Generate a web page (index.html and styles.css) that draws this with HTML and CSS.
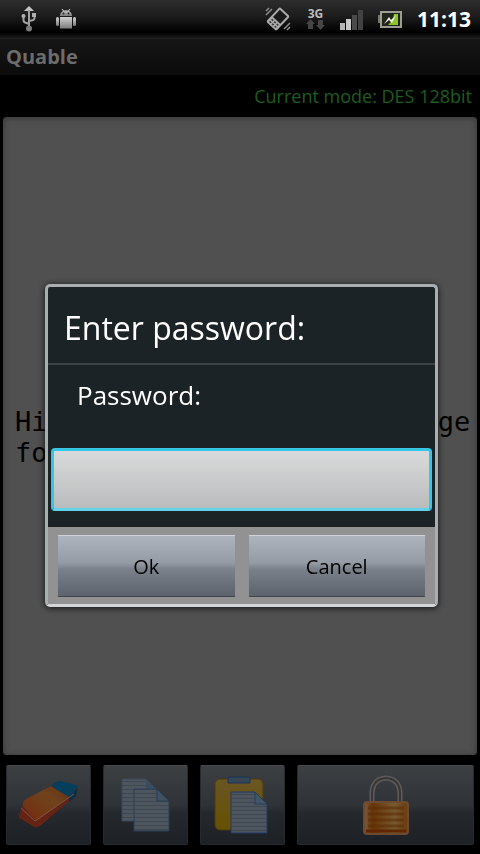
FILE: index.html
```html
<!DOCTYPE html>
<html lang="en">
<head>
<meta charset="UTF-8">
<meta name="viewport" content="width=device-width, initial-scale=1">
<title>Quable</title>
<link rel="stylesheet" href="styles.css">
</head>
<body>
  <header class="status-bar">
    <div class="status-left">
      <!-- usb -->
      <svg width="16" height="26" viewBox="0 0 16 26">
        <defs>
          <linearGradient id="silver" x1="0" y1="0" x2="0" y2="1">
            <stop offset="0" stop-color="#d2d2d2"/>
            <stop offset="1" stop-color="#7c7c7c"/>
          </linearGradient>
        </defs>
        <path d="M8 0l5 5H3z" fill="#c4c4c4"/>
        <path d="M8 4v18M2.500 10v4q0 2.500 3 3l2.500 1M13.500 9v3q0 2-3 2.500L8 15" fill="none" stroke="#a2a2a2" stroke-width="2"/>
        <rect x="11" y="7" width="4" height="4" fill="#b0b0b0"/>
        <circle cx="2.500" cy="10" r="2" fill="#b0b0b0"/>
        <circle cx="8" cy="22.500" r="3" fill="#7c7c7c"/>
      </svg>
      <!-- android robot -->
      <svg width="20" height="20" viewBox="0 0 20 20" fill="url(#silver)">
        <path d="M4 7Q4 3.500 7 2L5.500 0h1L8 1.500q2-.6 4 0L13.500 0h1L13 2q3 1.500 3 5z"/>
        <path d="M4 8h12v11.500H4z"/>
        <rect x="0" y="8" width="3" height="9" rx="1.500"/>
        <rect x="17" y="8" width="3" height="9" rx="1.500"/>
        <circle cx="7.500" cy="4.500" r="1" fill="#222"/>
        <circle cx="12.500" cy="4.500" r="1" fill="#222"/>
      </svg>
    </div>
    <div class="status-right">
      <!-- vibrate -->
      <svg width="26" height="24" viewBox="0 0 26 24">
        <g transform="rotate(43 13 12)">
          <rect x="6" y="2" width="14" height="20" rx="2" fill="#aaa"/>
          <rect x="8" y="4" width="10" height="10" fill="#1a1a1a"/>
          <path d="M8.500 16.500h2M12 16.500h2M15.500 16.500h2M8.500 19.500h2M12 19.500h2M15.500 19.500h2" stroke="#333" stroke-width="1.500"/>
        </g>
        <path d="M1 8l6-6M1 4l3-3M19 22l6-6M22 23l3-3" fill="none" stroke="#8d8d8d" stroke-width="1.500"/>
      </svg>
      <div class="network">
        <span>3G</span>
        <svg width="19" height="11" viewBox="0 0 19 11" fill="#454545">
          <path d="M4.500 0L9 5H7v5H2V5H0z"/>
          <path d="M14.500 11L10 6h2V1h5v5h2z"/>
        </svg>
      </div>
      <!-- signal -->
      <svg width="23" height="22" viewBox="0 0 23 22">
        <rect x="0" y="15" width="5" height="7" fill="#b5b5b5"/>
        <rect x="6" y="11" width="5" height="11" fill="#c8c8c8"/>
        <rect x="12" y="7" width="5" height="15" fill="#4a4a4a"/>
        <rect x="18" y="2" width="5" height="20" fill="#424242"/>
      </svg>
      <!-- battery -->
      <svg width="24" height="17" viewBox="0 0 24 17">
        <rect x="0" y="4" width="3" height="8" fill="#777970"/>
        <rect x="3" y="1" width="20" height="15" fill="#20241a" stroke="#9c9d94" stroke-width="2"/>
        <path d="M10 14L20 3v11z" fill="#85b927"/>
        <path d="M16 3h4v11h-6z" fill="#8cc528"/>
        <path d="M6 13l5-7 2 3 5-5-4 8-3-3z" fill="#f0f4df"/>
      </svg>
      <time>11:13</time>
    </div>
  </header>

  <main class="app">
    <h1 class="title-bar">Quable</h1>
    <p class="mode">Current mode: DES 128bit</p>
    <div class="message-panel">
      <textarea class="message" rows="2" aria-label="Message">Hi! This is a secret message
for you</textarea>
    </div>
    <nav class="toolbar">
      <button class="tool" aria-label="Clear">
        <svg width="64" height="52" viewBox="0 0 64 52">
          <defs>
            <linearGradient id="rubber" x1="0" y1="1" x2="1" y2="0">
              <stop offset="0" stop-color="#74290f"/>
              <stop offset=".6" stop-color="#70431c"/>
              <stop offset="1" stop-color="#643019"/>
            </linearGradient>
          </defs>
          <path d="M7 24L38 4Q40 2 43 3l17 4q2 1 1 3l-3 7-35 30q-3 2-6 1L4 40q-3-1-2-4z" fill="#642313"/>
          <path d="M9 20L34 7l18 11-31 23q-2 1-4-1L6 27q-1-4 3-7z" fill="url(#rubber)"/>
          <path d="M34 7l5-4q2-1 5-1l15 4q3 1 1 3l-8 9z" fill="#053f5b"/>
          <path d="M52 18l9-9-2 8-7 6z" fill="#093047"/>
          <path d="M4 29l14 13L57 15" fill="none" stroke="#7c5547" stroke-width="1"/>
        </svg>
      </button>
      <button class="tool" aria-label="Copy">
        <svg width="50" height="54" viewBox="0 0 50 54">
          <defs>
            <pattern id="lines" width="4" height="4" patternUnits="userSpaceOnUse">
              <rect width="4" height="4" fill="#4d555e"/>
              <rect y="3" width="4" height="1" fill="#3f4751"/>
            </pattern>
          </defs>
          <path d="M1 1h24l10 10v32H1z" fill="url(#lines)" stroke="#39485a"/>
          <path d="M25 1v10h10z" fill="#3a4c60"/>
          <path d="M13 11h23l12 12v30H13z" fill="url(#lines)" stroke="#2b3e56"/>
          <path d="M36 11v12h12z" fill="#3f5163" stroke="#2b3c50"/>
        </svg>
      </button>
      <button class="tool" aria-label="Paste">
        <svg width="58" height="60" viewBox="0 0 58 60">
          <defs>
            <linearGradient id="board" x1="0" y1="0" x2="0" y2="1">
              <stop offset="0" stop-color="#695624"/>
              <stop offset="1" stop-color="#665000"/>
            </linearGradient>
          </defs>
          <rect x="1" y="4" width="48" height="51" rx="5" fill="url(#board)" stroke="#4b3a10"/>
          <path d="M14 8V3q0-1 1-1h20q1 0 1 1v5z" fill="#374654" stroke="#1a3056"/>
          <path d="M17 17h24l12 12v29H17z" fill="url(#lines)" stroke="#22386a"/>
          <path d="M41 17v12h12z" fill="#40556a" stroke="#2b3c50"/>
        </svg>
      </button>
      <button class="tool" aria-label="Encrypt">
        <svg width="46" height="60" viewBox="0 0 46 60">
          <defs>
            <linearGradient id="brass" x1="0" y1="0" x2="1" y2="0">
              <stop offset="0" stop-color="#7d5a3a"/>
              <stop offset=".2" stop-color="#673708"/>
              <stop offset=".7" stop-color="#7b6034"/>
              <stop offset="1" stop-color="#68380e"/>
            </linearGradient>
            <linearGradient id="ribs" x1="0" y1="0" x2="0" y2="6" gradientUnits="userSpaceOnUse" spreadMethod="repeat">
              <stop offset="0" stop-color="#5a2804" stop-opacity="0"/>
              <stop offset=".5" stop-color="#5a2804" stop-opacity=".7"/>
              <stop offset="1" stop-color="#5a2804" stop-opacity="0"/>
            </linearGradient>
          </defs>
          <path d="M9 26V17Q10 4 23 3q13 1 14 14v9" fill="none" stroke="#5d5a5b" stroke-width="5"/>
          <path d="M9 26V17Q10 4 23 3q13 1 14 14v9" fill="none" stroke="#393636" stroke-width="2"/>
          <rect x="1" y="27" width="44" height="32" rx="3" fill="url(#brass)" stroke="#6b4a30" stroke-width="2"/>
          <path d="M5 29h36v27H5z" fill="url(#ribs)"/>
          <path d="M3 56h40" stroke="#5e2605" stroke-width="3"/>
        </svg>
      </button>
    </nav>
  </main>

  <div class="overlay">
    <form class="dialog" role="dialog" aria-labelledby="dialog-title">
      <h2 class="dialog-title" id="dialog-title">Enter password:</h2>
      <div class="dialog-body">
        <label for="password">Password:</label>
        <input type="password" id="password">
      </div>
      <div class="dialog-buttons">
        <button type="button">Ok</button>
        <button type="button">Cancel</button>
      </div>
    </form>
  </div>
</body>
</html>
```
FILE: styles.css
```css
* {
  box-sizing: border-box;
}

body {
  margin: 0;
  height: 100vh;
  display: flex;
  flex-direction: column;
  background: #000;
  color: #fff;
  font-family: "Open Sans", "Noto Sans", sans-serif;
  overflow: hidden;
}

svg {
  display: block;
}

/* status bar */
.status-bar {
  height: 38px;
  flex: none;
  display: flex;
  justify-content: space-between;
  align-items: center;
  padding: 0 9px 0 21px;
  background: linear-gradient(#2d2d2d, #1b1b1b 45%, #000 85%, #1a1a1a);
}

.status-left,
.status-right {
  display: flex;
  align-items: center;
}

.status-left {
  gap: 19px;
}

.status-right {
  gap: 15px;
}

.network {
  display: flex;
  flex-direction: column;
  align-items: center;
  font-size: 12px;
  line-height: 11px;
  font-weight: bold;
  color: #bbb;
}

.status-bar time {
  font-size: 21px;
  font-weight: bold;
}

/* app */
.app {
  flex: 1;
  display: flex;
  flex-direction: column;
}

.title-bar {
  margin: 0;
  padding: 0 6px 1px;
  border-top: 1px solid #202020;
  background: linear-gradient(#161616, #0b0b0b);
  color: #6c6c6c;
  font-size: 20px;
  line-height: 35px;
  font-weight: bold;
}

.mode {
  margin: 0;
  padding: 0 8px;
  color: #1f5c1f;
  font-size: 18px;
  line-height: 42px;
  text-align: right;
}

.message-panel {
  flex: 1;
  display: flex;
  align-items: center;
  margin: 0 3px;
  padding: 2px 4px 0 12px;
  border-radius: 4px;
  background: #505050;
  box-shadow: inset 0 1px 6px #333;
}

.message {
  width: 100%;
  padding: 0;
  border: 0;
  outline: 0;
  resize: none;
  overflow: hidden;
  background: none;
  color: #000;
  font-family: "DejaVu Sans Mono", monospace;
  font-size: 27px;
  line-height: 31px;
}

.toolbar {
  display: grid;
  grid-template-columns: 85fr 85fr 85fr 177fr;
  gap: 12px;
  padding: 10px 6px 9px;
}

.tool {
  height: 80px;
  padding: 0;
  display: flex;
  justify-content: center;
  align-items: center;
  border: 1px solid #26292d;
  border-top-color: #484a4c;
  border-radius: 2px;
  background: linear-gradient(#3d4043, #2f3236 50%, #25282c 60%, #1d2024);
}

/* password dialog */
.overlay {
  position: fixed;
  inset: 37px 0 0;
  display: flex;
  align-items: center;
  padding: 0 42px 0 45px;
}

.dialog {
  width: 100%;
  border: 3px solid #a9aeb0;
  border-bottom-color: #d2d5d8;
  border-radius: 5px;
  background: #1c2326;
  box-shadow: 0 1px 6px #111;
}

.dialog-title {
  margin: 0;
  padding: 19px 16px 13px;
  border-bottom: 2px solid #3d4346;
  font-size: 32px;
  line-height: 44px;
  font-weight: normal;
}

.dialog-body {
  display: flex;
  flex-direction: column;
  gap: 33px;
  padding: 10px 3px 16px;
}

.dialog-body label {
  padding-left: 26px;
  font-size: 26px;
  line-height: 40px;
}

.dialog-body input {
  width: 100%;
  height: 63px;
  padding: 0 12px;
  border: 3px solid #35c5e5;
  border-bottom-color: #62d2ea;
  border-radius: 4px;
  outline: 0;
  background: linear-gradient(#d6d9db, #d3d5d5 20%, #b9bbbc);
  color: #000;
  font: inherit;
  font-size: 26px;
}

.dialog-buttons {
  display: grid;
  grid-template-columns: 1fr 1fr;
  gap: 12px;
  padding: 8px 9px 7px;
  background: #929292;
}

.dialog-buttons button {
  height: 62px;
  padding: 0;
  border: 1px solid #8c929a;
  border-top-color: #d0d4d8;
  border-bottom-color: #40454b;
  border-radius: 2px;
  background: linear-gradient(#adb4bd, #959ba5 45%, #7b818b 55%, #5c636d);
  color: #000;
  font-family: inherit;
  font-size: 20px;
}
```
